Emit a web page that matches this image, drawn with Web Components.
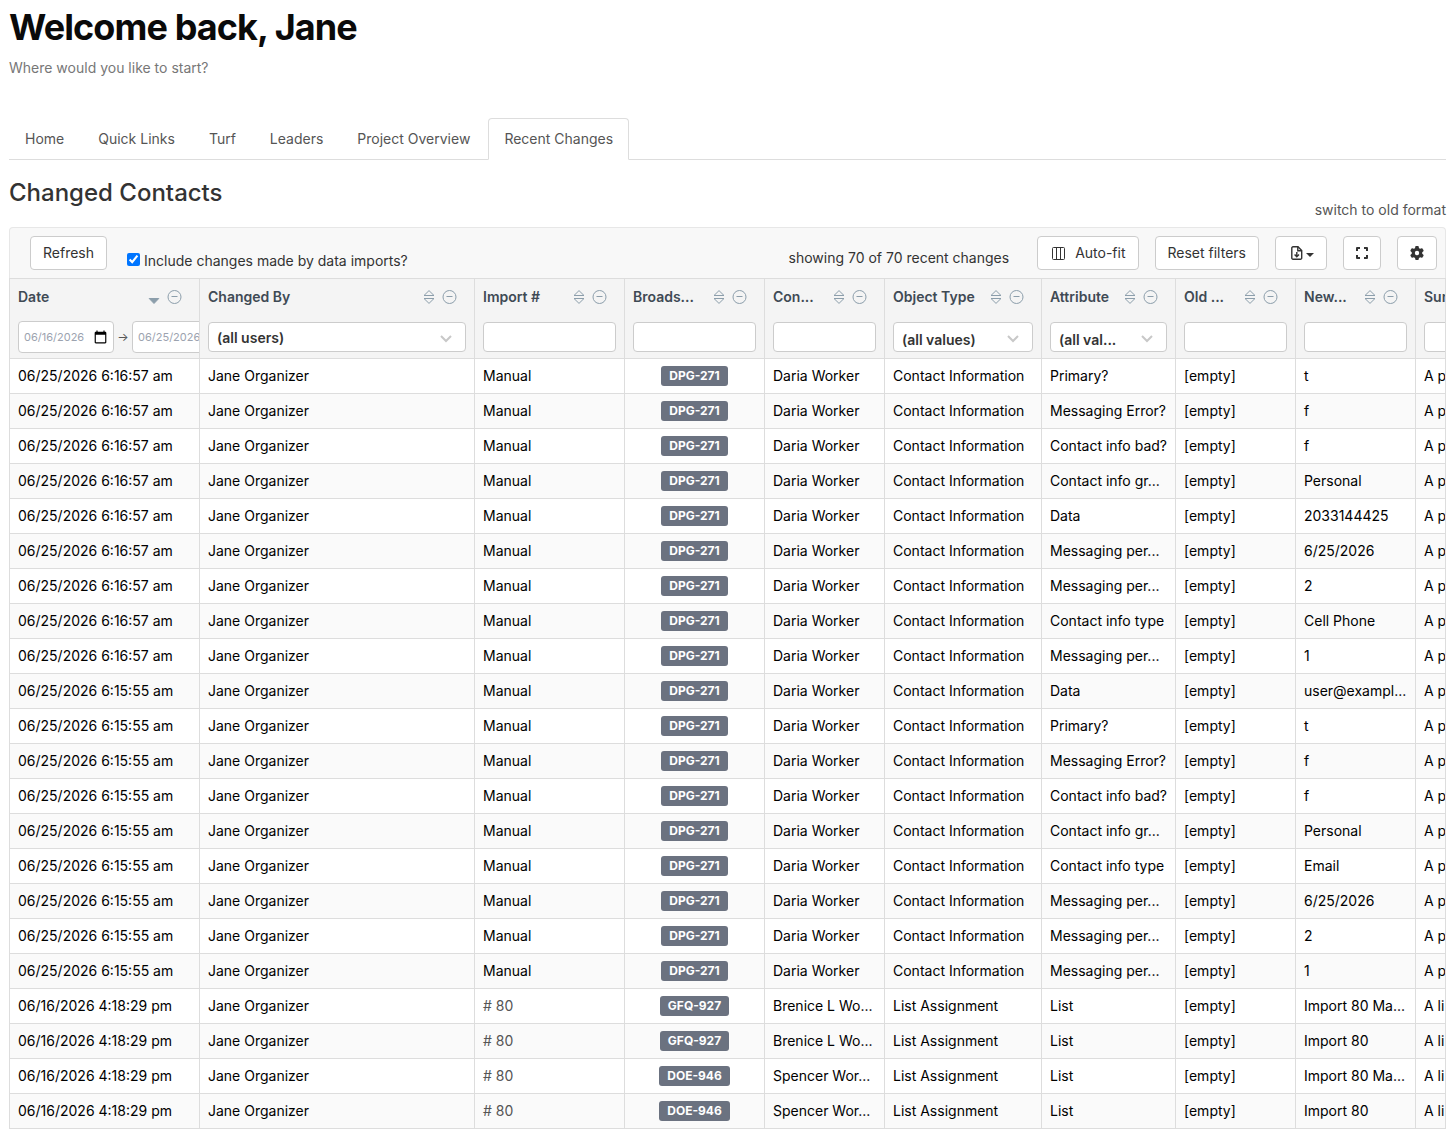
<!DOCTYPE html>
<html lang="en">
<head>
<meta charset="utf-8">
<title>Recent Changes</title>
<style>
  body {
    margin: 0;
    padding: 7px 4px 0 9px;
    font-family: Inter, "Liberation Sans", sans-serif;
    font-size: 14px;
    line-height: 20px;
    color: #333333;
    background: #ffffff;
    overflow: hidden;
  }
</style>
</head>
<body>
  <page-heading>
    Welcome back, Jane
    <span slot="sub">Where would you like to start?</span>
  </page-heading>
  <tab-bar>
    <tab-item>Home</tab-item>
    <tab-item>Quick Links</tab-item>
    <tab-item>Turf</tab-item>
    <tab-item>Leaders</tab-item>
    <tab-item>Project Overview</tab-item>
    <tab-item active>Recent Changes</tab-item>
  </tab-bar>
  <section-heading>
    Changed Contacts
    <span slot="action">switch to old format</span>
  </section-heading>
  <grid-toolbar></grid-toolbar>
  <changes-grid></changes-grid>

<script>
"use strict";

(() => {
  const define = (name, html, setup) => {
    customElements.define(name, class extends HTMLElement {
      constructor() {
        super();
        this.attachShadow({mode: "open"}).innerHTML = html;
      }

      connectedCallback() {
        if (setup) {
          setup(this, this.shadowRoot);
        }
      }
    });
  };

  define("page-heading", `
    <style>
      :host { display: block; }
      h1 {
        margin: 0;
        font-size: 36px;
        line-height: 40px;
        font-weight: 700;
        letter-spacing: -0.025em;
        color: #0a0a0a;
      }
      p { margin: 11px 0 0; color: #777777; }
    </style>
    <h1><slot></slot></h1>
    <p><slot name="sub"></slot></p>
  `);

  define("tab-bar", `
    <style>
      :host { display: block; margin-top: 40px; }
      nav {
        display: flex;
        gap: 2px;
        border-bottom: 1px solid #dddddd;
      }
    </style>
    <nav><slot></slot></nav>
  `);

  define("tab-item", `
    <style>
      :host { display: block; margin-bottom: -1px; }
      a {
        display: block;
        padding: 10px 15px;
        border: 1px solid transparent;
        border-radius: 4px 4px 0 0;
        color: #555555;
        text-decoration: none;
      }
      :host([active]) a {
        background: #ffffff;
        border-color: #dddddd;
        border-bottom-color: #ffffff;
      }
    </style>
    <a href="#"><slot></slot></a>
  `);

  define("section-heading", `
    <style>
      :host {
        display: flex;
        justify-content: space-between;
        align-items: flex-end;
        padding: 20px 0 7px;
      }
      h2 {
        margin: 0 0 14px;
        font-size: 24px;
        line-height: 26px;
        font-weight: 500;
      }
      a { color: #555555; text-decoration: none; }
    </style>
    <h2><slot></slot></h2>
    <a href="#"><slot name="action"></slot></a>
  `);

  define("tool-button", `
    <style>
      :host { display: block; }
      button {
        display: flex;
        align-items: center;
        height: 34px;
        padding: 0 12px;
        font: inherit;
        color: #333333;
        background: #ffffff;
        border: 1px solid #cccccc;
        border-radius: 4px;
      }
    </style>
    <button type="button"><slot></slot></button>
  `, (host, root) => {
    const label = host.getAttribute("label");
    if (label) {
      root.querySelector("button").setAttribute("aria-label", label);
    }
  });

  define("grid-toolbar", `
    <style>
      :host {
        display: flex;
        align-items: flex-start;
        gap: 16px;
        padding: 8px 8px 7px 20px;
        background: #f8f8f8;
        border: 1px solid #e7e7e7;
        border-bottom: 0;
        border-radius: 4px 4px 0 0;
      }
      svg { display: block; }
      label {
        display: flex;
        align-items: center;
        gap: 4px;
        margin: 15px 0 0 4px;
      }
      input { width: 13px; height: 13px; margin: 0 0 3px; }
      .count { margin: 12px 12px 0 auto; }
      .cols { margin: 0 10px 0 2px; }
      .file { margin: 0 1px 0 3px; }
    </style>
    <tool-button>Refresh</tool-button>
    <label for="imports"><input type="checkbox" id="imports" checked>Include changes made by data imports?</label>
    <span class="count">showing 70 of 70 recent changes</span>
    <tool-button>
      <svg class="cols" width="13" height="13" viewBox="0 0 13 13" fill="none" stroke="#333333">
        <rect x=".5" y=".5" width="12" height="12" rx="1"/>
        <path d="M4.5 .5v12M8.5 .5v12"/>
      </svg>
      Auto-fit
    </tool-button>
    <tool-button>Reset filters</tool-button>
    <tool-button label="Export">
      <svg class="file" width="12" height="14" viewBox="0 0 12 14" fill="none" stroke="#333333" stroke-width="1.4">
        <path d="M2 .8h5L10.7 4.500V12a1.200 1.200 0 0 1-1.200 1.200H2A1.200 1.200 0 0 1 .8 12V2A1.200 1.200 0 0 1 2 .8z"/>
        <path d="M6.800 .8v4h4"/>
        <path d="M5.800 6v4.500M3.600 8.600l2.200 2.200L8 8.600"/>
      </svg>
      <svg width="10" height="14" viewBox="0 0 10 14" fill="#333333"><path d="M2 7h8L6 11z"/></svg>
    </tool-button>
    <tool-button label="Full screen">
      <svg width="12" height="12" viewBox="0 0 12 12" fill="none" stroke="#333333" stroke-width="2" stroke-linejoin="round">
        <path d="M1 4V1h3M8 1h3v3M11 8v3H8M4 11H1V8"/>
      </svg>
    </tool-button>
    <tool-button label="Settings">
      <svg width="14" height="14" viewBox="0 0 512 512" fill="#333333">
        <path d="M495.900 166.600c3.200 8.700 .5 18.400-6.400 24.600l-43.300 39.400c1.100 8.300 1.700 16.800 1.700 25.400s-.6 17.100-1.700 25.400l43.300 39.400c6.900 6.200 9.600 15.900 6.400 24.600c-4.400 11.900-9.700 23.300-15.800 34.300l-4.700 8.100c-6.600 11-14 21.400-22.100 31.200c-5.900 7.200-15.700 9.600-24.500 6.800l-55.700-17.700c-13.400 10.300-28.200 18.900-44 25.400l-12.500 57.100c-2 9.100-9 16.300-18.200 17.800c-13.800 2.300-28 3.500-42.500 3.500s-28.700-1.200-42.500-3.500c-9.200-1.500-16.200-8.700-18.200-17.800l-12.500-57.100c-15.800-6.500-30.600-15.100-44-25.400L83.100 425.900c-8.800 2.800-18.600 .3-24.500-6.800c-8.100-9.800-15.500-20.200-22.100-31.200l-4.700-8.100c-6.100-11-11.400-22.400-15.800-34.300c-3.200-8.700-.5-18.400 6.400-24.600l43.300-39.400C64.600 273.100 64 264.600 64 256s.6-17.100 1.700-25.400L22.400 191.200c-6.900-6.200-9.600-15.900-6.400-24.600c4.400-11.900 9.700-23.300 15.800-34.300l4.700-8.100c6.600-11 14-21.400 22.100-31.200c5.900-7.200 15.700-9.600 24.500-6.800l55.700 17.700c13.400-10.300 28.200-18.900 44-25.400l12.500-57.100c2-9.100 9-16.300 18.200-17.800C227.300 1.200 241.500 0 256 0s28.700 1.200 42.500 3.500c9.200 1.500 16.200 8.700 18.200 17.800l12.500 57.100c15.800 6.500 30.600 15.100 44 25.400l55.700-17.700c8.800-2.800 18.600-.3 24.500 6.800c8.100 9.800 15.500 20.200 22.100 31.200l4.700 8.100c6.100 11 11.400 22.400 15.800 34.300zM256 336a80 80 0 1 0 0-160 80 80 0 1 0 0 160z"/>
      </svg>
    </tool-button>
  `);

  // title, sort state and hide control of one column; the filter is slotted
  define("column-head", `
    <style>
      :host { display: block; padding: 8px 8px 6px; text-align: left; }
      .title {
        display: flex;
        align-items: center;
        gap: 7px;
        height: 20px;
        margin-right: 9px;
        margin-bottom: 15px;
        color: #3f4a54;
        font-weight: 600;
      }
      .title span { flex: 1; white-space: nowrap; }
      svg { display: block; }
      button { padding: 0; border: 0; background: none; }
      .filter { display: flex; align-items: center; height: 30px; }
    </style>
    <div class="title">
      <span></span>
      <button type="button" aria-label="Sort"></button>
      <button type="button" aria-label="Hide column">
        <svg width="15" height="14" viewBox="0 0 15 14" fill="none" stroke="#8c9eab">
          <circle cx="7.500" cy="7" r="6.500"/>
          <path d="M4.500 6.500h6"/>
        </svg>
      </button>
    </div>
    <div class="filter"><slot></slot></div>
  `, (host, root) => {
    root.querySelector("span").textContent = host.getAttribute("label");
    root.querySelector("button").innerHTML = host.hasAttribute("sorted")
      ? `<svg width="12" height="14" viewBox="0 0 12 14" fill="#8c9eab" stroke="#8c9eab" stroke-linejoin="round"><path d="M1.200 8.500h9.600L6 13.500z"/></svg>`
      : `<svg width="12" height="14" viewBox="0 0 12 14" fill="none" stroke="#8c9eab" stroke-linejoin="round">
           <path d="M6 .6L11 5.500H1zM6 13.400L11 8.500H1z"/>
         </svg>`;
  });

  define("text-filter", `
    <style>
      :host { display: block; flex: 1; }
      input {
        display: block;
        box-sizing: border-box;
        width: 100%;
        height: 30px;
        padding: 0 8px;
        font: inherit;
        border: 1px solid #cccccc;
        border-radius: 4px;
        background: #ffffff;
      }
    </style>
    <input type="text">
  `, (host, root) => {
    root.querySelector("input").setAttribute("aria-label", host.getAttribute("label"));
  });

  define("select-filter", `
    <style>
      :host { display: grid; flex: 1; align-items: center; }
      select {
        grid-area: 1 / 1;
        appearance: none;
        box-sizing: border-box;
        width: 100%;
        height: 30px;
        padding: 2px 8px 0;
        font: inherit;
        font-weight: 600;
        color: #333333;
        border: 1px solid #cccccc;
        border-radius: 4px;
        background: #ffffff;
      }
      :host([low]) select { padding-top: 5px; }
      svg {
        grid-area: 1 / 1;
        justify-self: end;
        margin: 3px 14px 0 0;
        pointer-events: none;
      }
    </style>
    <select><option></option></select>
    <svg width="12" height="8" viewBox="0 0 12 8" fill="none" stroke="#c8c8c8" stroke-width="2"><path d="M1 1l5 5 5-5"/></svg>
  `, (host, root) => {
    root.querySelector("select").setAttribute("aria-label", host.getAttribute("label"));
    root.querySelector("option").textContent = host.getAttribute("value");
  });

  define("date-range", `
    <style>
      :host { display: flex; align-items: center; flex: 1; min-width: 0; }
      input {
        flex: none;
        box-sizing: border-box;
        width: 96px;
        height: 32px;
        padding: 0 5px;
        font: inherit;
        font-size: 11px;
        color: #9ca3af;
        border: 1px solid #cccccc;
        border-radius: 4px;
        background: #ffffff;
      }
      input::-webkit-datetime-edit-month-field,
      input::-webkit-datetime-edit-day-field,
      input::-webkit-datetime-edit-year-field {
        padding: 0;
      }
      input::-webkit-calendar-picker-indicator {
        width: 15px;
        height: 15px;
        margin: 0;
        padding: 0;
      }
      span { flex: none; width: 18px; text-align: center; font-size: 12px; color: #555555; }
    </style>
    <input type="date" value="2026-06-16" aria-label="From date">
    <span>→</span>
    <input type="date" value="2026-06-25" aria-label="To date">
  `);

  define("id-badge", `
    <style>
      :host {
        display: inline-block;
        padding: 0 8px;
        font-size: 12px;
        line-height: 20px;
        font-weight: 700;
        color: #ffffff;
        background: #6b7280;
        border-radius: 3px;
        vertical-align: middle;
      }
    </style>
    <slot></slot>
  `);

  const columns = [
    ["Date", 190, "date"],
    ["Changed By", 275, "select", "(all users)"],
    ["Import #", 150, "text"],
    ["Broads...", 140, "text"],
    ["Con...", 120, "text"],
    ["Object Type", 157, "select", "(all values)"],
    ["Attribute", 134, "select", "(all val..."],
    ["Old ...", 120, "text"],
    ["New...", 120, "text"],
    ["Summary", 200, "text"]
  ];

  const contact = (date, changes) => changes.map(([attribute, value]) =>
    [date, "Jane Organizer", "Manual", "DPG-271", "Daria Worker", "Contact Information", attribute, "[empty]", value, "A p"]);

  const listed = (id, name, value) =>
    ["06/16/2026 4:18:29 pm", "Jane Organizer", "# 80", id, name, "List Assignment", "List", "[empty]", value, "A li"];

  const rows = [
    ...contact("06/25/2026 6:16:57 am", [
      ["Primary?", "t"],
      ["Messaging Error?", "f"],
      ["Contact info bad?", "f"],
      ["Contact info gr...", "Personal"],
      ["Data", "2033144425"],
      ["Messaging per...", "6/25/2026"],
      ["Messaging per...", "2"],
      ["Contact info type", "Cell Phone"],
      ["Messaging per...", "1"]
    ]),
    ...contact("06/25/2026 6:15:55 am", [
      ["Data", "user@exampl..."],
      ["Primary?", "t"],
      ["Messaging Error?", "f"],
      ["Contact info bad?", "f"],
      ["Contact info gr...", "Personal"],
      ["Contact info type", "Email"],
      ["Messaging per...", "6/25/2026"],
      ["Messaging per...", "2"],
      ["Messaging per...", "1"]
    ]),
    listed("GFQ-927", "Brenice L Wo...", "Import 80 Ma..."),
    listed("GFQ-927", "Brenice L Wo...", "Import 80"),
    listed("DOE-946", "Spencer Wor...", "Import 80 Ma..."),
    listed("DOE-946", "Spencer Wor...", "Import 80")
  ];

  const filter = ([label, , type, value]) => {
    switch (type) {
      case "date": return `<date-range></date-range>`;
      case "select": return `<select-filter label="${label}" value="${value}"${label === "Changed By" ? "" : " low"}></select-filter>`;
      default: return `<text-filter label="${label}"></text-filter>`;
    }
  };

  const cell = (text, i) => {
    if (i === 3) {
      return `<td class="id"><id-badge>${text}</id-badge></td>`;
    }
    return `<td${text.startsWith("#") ? ` class="import"` : ""}>${text}</td>`;
  };

  define("changes-grid", `
    <style>
      :host {
        display: block;
        overflow: hidden;
        border: 1px solid #dddddd;
        border-width: 1px 1px 0;
      }
      table {
        table-layout: fixed;
        width: ${columns.reduce((sum, c) => sum + c[1], 0)}px;
        border-collapse: separate;
        border-spacing: 0;
      }
      th, td {
        box-sizing: border-box;
        padding: 0;
        overflow: hidden;
        border: 1px solid #dddddd;
        border-width: 0 1px 1px 0;
      }
      th { font-weight: 400; background: #f4f4f4; }
      td {
        height: 35px;
        padding: 0 0 0 8px;
        color: #000000;
        white-space: nowrap;
      }
      tbody tr:nth-child(even) { background: #fafafa; }
      .id { padding: 0; text-align: center; line-height: 0; }
      .import { color: #555555; }
    </style>
    <table>
      <colgroup>${columns.map(c => `<col style="width: ${c[1]}px">`).join("")}</colgroup>
      <thead>
        <tr>${columns.map(c => `<th><column-head label="${c[0]}"${c[2] === "date" ? " sorted" : ""}>${filter(c)}</column-head></th>`).join("")}</tr>
      </thead>
      <tbody>${rows.map(r => `<tr>${r.map(cell).join("")}</tr>`).join("")}</tbody>
    </table>
  `);
})();
</script>
</body>
</html>
